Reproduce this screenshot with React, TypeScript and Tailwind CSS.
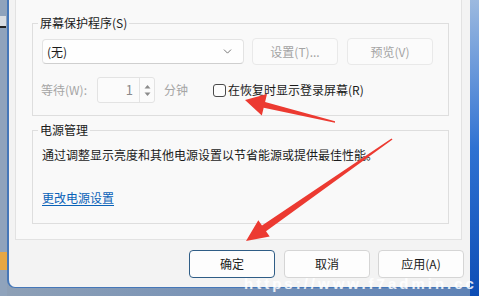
import { ChevronDown } from 'lucide-react';

const font = { fontFamily: '"Noto Sans CJK SC", "Noto Sans", sans-serif' };

function GroupTitle({ children }: { children: React.ReactNode }) {
  return <legend className="-ml-[4px] px-[2px] text-[12px] leading-[16px] text-[#1b1b1b]">{children}</legend>;
}

function FooterButton({ label, primary, className = '' }: { label: string; primary?: boolean; className?: string }) {
  return (
    <button
      className={`w-[86px] h-[28px] rounded-[4px] text-[12px] text-[#1b1b1b] bg-[#fdfdfd] border ${
        primary ? 'border-[#2f5d86]' : 'border-[#d5d5d5]'
      } ${className}`}
    >
      {label}
    </button>
  );
}

export default function App() {
  return (
    <div
      className="relative w-[479px] h-[296px] overflow-hidden flex bg-gradient-to-r from-[#8ea0b6] to-[#5e82b6]"
      style={font}
    >
      {/* desktop strip on the left */}
      <div className="w-[7px] h-full flex flex-col bg-[#8fa3bc]">
        <div className="mt-[16px] h-[12px] w-[6px] bg-[#d9dde2] border-b-2 border-[#222]" />
        <div className="mt-[224px] h-[18px] w-[7px] bg-[#e6a744]" />
      </div>

      {/* dialog window */}
      <div className="w-[463px] h-[288px] flex flex-col bg-[#f3f3f3] border-l-2 border-b border-[#4577b8] rounded-bl-[8px]">
        <div className="ml-[6px] w-[447px] h-[240px] flex flex-col pt-[15px] bg-[#f9f9f9] border-l border-r border-b border-[#e2e2e2]">
          <fieldset className="ml-[16px] w-[417px] border border-[#dedede] px-[9px] pt-[7px] pb-[12px]">
            <GroupTitle>屏幕保护程序(S)</GroupTitle>
            <div className="flex items-center h-[27px]">
              <div className="w-[202px] h-[25px] flex items-center justify-between pl-[4px] pr-[9px] rounded-[4px] bg-[#fefefe] border border-[#e3e3e3] border-b-[#cfcfcf]">
                <span className="text-[12px] leading-[16px] text-[#1b1b1b]">(无)</span>
                <ChevronDown className="w-[13px] h-[13px] text-[#5a5a5a]" strokeWidth={1.5} />
              </div>
              <button className="ml-[8px] w-[86px] h-[27px] rounded-[4px] bg-[#fbfbfb] border border-[#e9e9e9] text-[12px] text-[#a3a3a3]">
                设置(T)...
              </button>
              <button className="ml-[9px] w-[86px] h-[27px] rounded-[4px] bg-[#fbfbfb] border border-[#e9e9e9] text-[12px] text-[#a3a3a3]">
                预览(V)
              </button>
            </div>
            <div className="mt-[12px] flex items-center h-[26px] text-[12px] leading-[16px]">
              <span className="w-[56px] -ml-[1px] text-[#a5a5a5]">等待(W):</span>
              <div className="w-[58px] h-[26px] flex rounded-[3px] bg-[#fbfbfb] border border-[#e3e3e3]">
                <div className="flex-1 flex items-center justify-end pr-[6px] text-[13px] text-[#8a8a8a]">1</div>
                <div className="w-[15px] flex flex-col items-center justify-center border-l border-[#e3e3e3]">
                  <svg width="7" height="5" viewBox="0 0 7 5" className="mb-[3px]">
                    <path d="M0.5 4.5 L3.5 1 L6.5 4.5 Z" fill="#8c8c8c" />
                  </svg>
                  <svg width="7" height="5" viewBox="0 0 7 5">
                    <path d="M0.5 0.5 L3.5 4 L6.5 0.5 Z" fill="#8c8c8c" />
                  </svg>
                </div>
              </div>
              <span className="ml-[9px] text-[#a5a5a5]">分钟</span>
              <span className="ml-[25px] w-[13px] h-[13px] rounded-[3px] border border-[#4a4a4a] bg-[#fdfdfd]" />
              <span className="ml-[2px] text-[#1b1b1b]">在恢复时显示登录屏幕(R)</span>
            </div>
          </fieldset>

          <fieldset className="mt-[6px] ml-[16px] w-[417px] border border-[#dedede] px-[9px] pt-[9px] pb-[17px]">
            <GroupTitle>电源管理</GroupTitle>
            <p className="text-[12px] leading-[16px] text-[#1b1b1b]">
              通过调整显示亮度和其他电源设置以节省能源或提供最佳性能。
            </p>
            <a href="#" className="mt-[27px] block w-fit text-[12px] leading-[16px] text-[#0a62b8] underline underline-offset-2">
              更改电源设置
            </a>
          </fieldset>
        </div>

        <div className="flex justify-end pt-[10px] pr-[6px]">
          <FooterButton label="确定" primary className="mr-[9px]" />
          <FooterButton label="取消" className="mr-[8px]" />
          <FooterButton label="应用(A)" />
        </div>
      </div>

      {/* wallpaper on the right */}
      <div className="flex-1 h-full bg-gradient-to-b from-[#9cb9df] via-[#2f72d2] to-[#0d4db5]" />

      {/* red annotation arrows */}
      <svg className="absolute inset-0 pointer-events-none" width="479" height="296" viewBox="0 0 479 296">
        <polygon
          points="335,121.2 265.1,101.9 267,94.1 245,100 261.8,115.5 263.7,107.7 335,122.8"
          fill="#ec3a31"
        />
        <polygon
          points="392.5,139.6 266,231.3 269.7,236.6 246,241 258.3,220.2 262,225.5 391.5,138.4"
          fill="#ec3a31"
        />
      </svg>

      {/* watermark */}
      <div
        className="absolute left-[244px] top-[273px] text-[15px] font-bold tracking-[3px] text-white/85 whitespace-nowrap"
        style={{ fontFamily: '"Liberation Sans", sans-serif' }}
      >
        https://www.f7admin.cc
      </div>
    </div>
  );
}
